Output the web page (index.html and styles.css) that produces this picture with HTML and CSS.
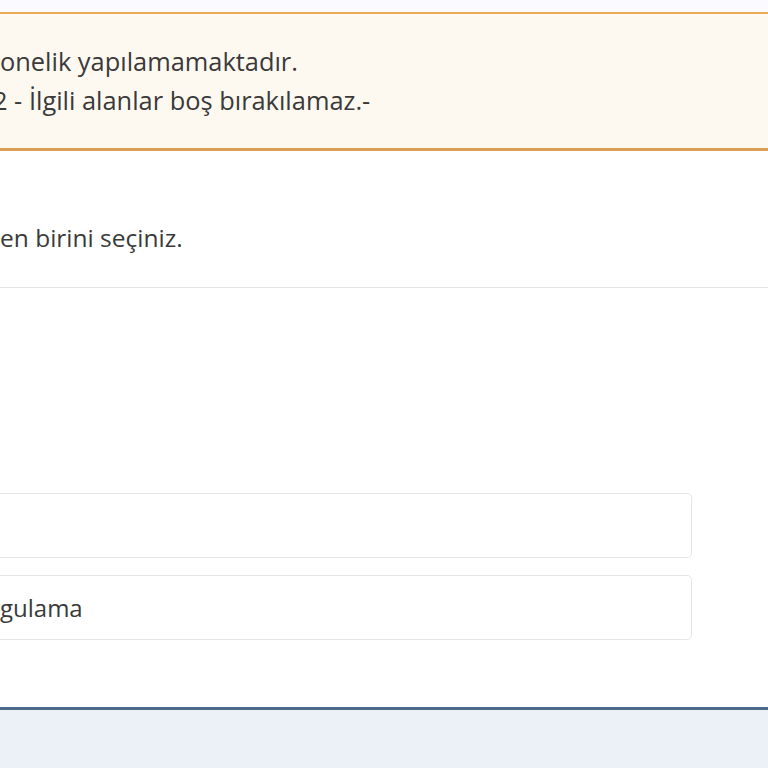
FILE: index.html
```html
<!DOCTYPE html>
<html lang="tr">
<head>
<meta charset="utf-8">
<title>Abonelik</title>
<link rel="stylesheet" href="styles.css">
</head>
<body>
<div class="page">
  <div class="topstrip"></div>
  <div class="alert">
    <div class="alert-line">onelik yapılamamaktadır.</div>
    <div class="alert-line shift">2 - İlgili alanlar boş bırakılamaz.-</div>
  </div>
  <div class="panel">
    <div class="panel-head">en birini seçiniz.</div>
    <div class="panel-body">
      <div class="option"><span class="option-text"></span></div>
      <div class="option"><span class="option-text">gulama</span></div>
    </div>
  </div>
  <div class="footer"></div>
</div>
</body>
</html>
```
FILE: styles.css
```css
html, body {
  margin: 0;
  padding: 0;
  background: #ffffff;
  overflow: hidden;
}
.page {
  width: 768px;
  height: 768px;
  display: flex;
  flex-direction: column;
  font-family: "Open Sans", "Noto Sans", sans-serif;
  color: #3a3a3a;
  font-size: 25.4px;
}
.topstrip {
  height: 12px;
  background: #fbfbff;
}
.alert {
  background: #fef9f0;
  border-top: 2px solid #eaab52;
  border-bottom: 3px solid #db9e55;
  padding: 28px 0 28px 0;
}
.alert-line {
  line-height: 39px;
  white-space: nowrap;
}
.alert-line.shift {
  margin-left: -7px;
}
.panel {
  flex: 1;
  display: flex;
  flex-direction: column;
}
.panel-head {
  padding: 67px 0 30px 0;
  line-height: 39px;
  border-bottom: 1px solid #e4e4e4;
  white-space: nowrap;
  font-size: 24.5px;
}
.panel-body {
  padding-top: 205px;
  display: flex;
  flex-direction: column;
  gap: 17px;
  width: 692px;
}
.option {
  height: 65px;
  box-sizing: border-box;
  border: 1.5px solid #e6e6e6;
  border-left: none;
  border-radius: 0 5px 5px 0;
  display: flex;
  align-items: center;
  background: #fff;
}
.option-text {
  line-height: 30px;
  font-size: 24px;
}
.footer {
  height: 58px;
  background: #ecf0f7;
  border-top: 3px solid #4b6a8b;
}
```
